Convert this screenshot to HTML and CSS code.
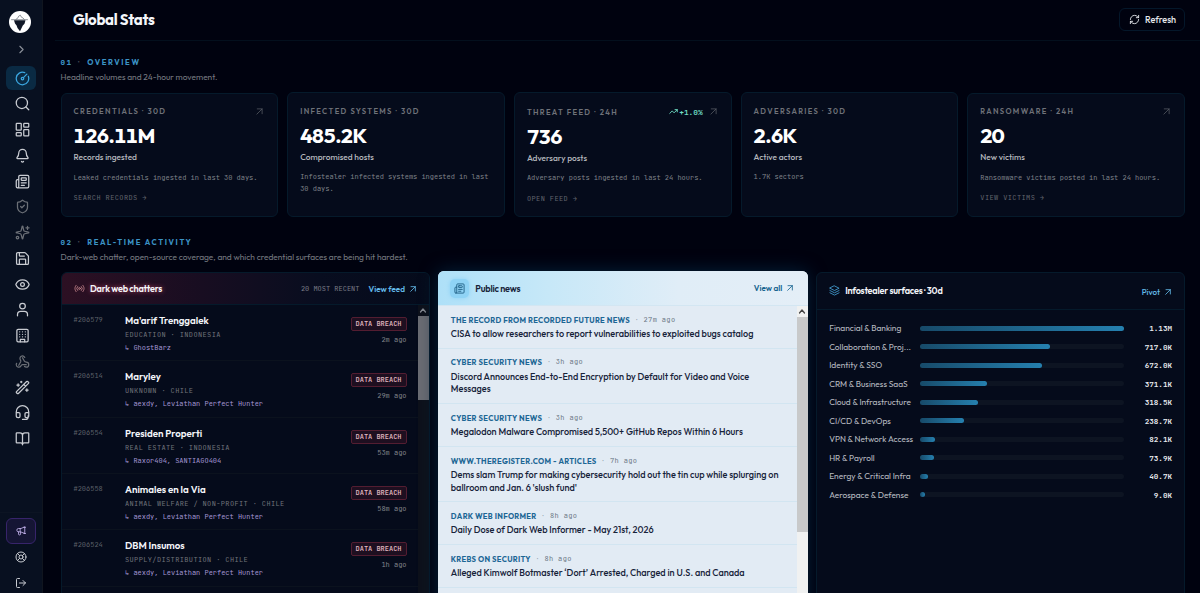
FILE: index.html
```
<!DOCTYPE html>
<html lang="en">

<head>
    <meta charset="UTF-8">
    <meta name="viewport" content="width=device-width, initial-scale=1.0">
    <title>Global Stats</title>
    <link rel="stylesheet" href="styles.css">
</head>

<body>
    <!-- shared icons -->
    <svg class="sprite">
        <symbol id="arrow" viewBox="0 0 24 24"><path d="M6 5h13v13M19 5 5 19" /></symbol>
        <symbol id="news" viewBox="0 0 24 24"><path d="M15 18h-5M18 14h-8M4 22h16a2 2 0 0 0 2-2V4a2 2 0 0 0-2-2H8a2 2 0 0 0-2 2v16a2 2 0 0 1-4 0v-9a2 2 0 0 1 2-2h2" /><rect width="8" height="4" x="10" y="6" rx="1" /></symbol>
    </svg>

    <nav class="sidebar">
        <div class="logo">
            <svg viewBox="0 0 22 22"><path d="M5 9.200h11.500l-1 3.600-1.700 1.700-2.800 5.700L8.500 17l-.9-2.600-1.600-1.800z" /><path class="line" d="M2.500 8.700h16M7 8.300l2-1.500.700-1.700 1.700-.9 1 2 1.500.7 1.200 1.300" /></svg>
        </div>
        <svg class="expand" viewBox="0 0 24 24"><path d="m9 18 6-6-6-6" /></svg>
        <ul class="menu">
            <li class="active"><svg viewBox="0 0 24 24"><path d="M15.600 2.700a10 10 0 1 0 5.700 5.700" /><circle cx="12" cy="12" r="2" /><path d="M13.400 10.600 19 5" /></svg></li>
            <li><svg viewBox="0 0 24 24"><circle cx="11" cy="11" r="9" /><path d="m22 22-4.500-4.500" /></svg></li>
            <li><svg viewBox="0 0 24 24"><rect x="2" y="2" width="8" height="11" rx="1" /><rect x="14" y="2" width="8" height="6" rx="1" /><rect x="14" y="12" width="8" height="10" rx="1" /><rect x="2" y="17" width="8" height="5" rx="1" /></svg></li>
            <li><svg viewBox="0 0 24 24"><path d="M10.300 21.500a2 2 0 0 0 3.400 0M3.300 15.300A1 1 0 0 0 4 17h16a1 1 0 0 0 .700-1.700C19.400 14 18 12.500 18 8A6 6 0 0 0 6 8c0 4.500-1.400 6-2.700 7.300" /></svg></li>
            <li><svg viewBox="0 0 24 24"><use href="#news" /></svg></li>
            <li class="dim"><svg viewBox="0 0 24 24"><path d="M20 13c0 5-3.500 7.500-7.700 9a1 1 0 0 1-.700 0C7.500 20.500 4 18 4 13V6a1 1 0 0 1 1-1c2 0 4.500-1.200 6.200-2.700a1.200 1.200 0 0 1 1.500 0C14.500 3.800 17 5 19 5a1 1 0 0 1 1 1z" /><path d="m9 12 2 2 4-4" /></svg></li>
            <li class="dim"><svg viewBox="0 0 24 24"><path d="M9.900 15.500A2 2 0 0 0 8.500 14l-6.100-1.600a.5.5 0 0 1 0-1L8.500 10A2 2 0 0 0 9.900 8.500l1.600-6.100a.5.5 0 0 1 1 0L14 8.500a2 2 0 0 0 1.500 1.500l6.100 1.500a.5.5 0 0 1 0 1L15.500 14a2 2 0 0 0-1.500 1.500l-1.500 6.100a.5.5 0 0 1-1 0z" /><path d="M20 2v5M22.500 4.500h-5" /><circle cx="4" cy="20" r="2" /></svg></li>
            <li><svg viewBox="0 0 24 24"><path d="M15.200 2.500a2 2 0 0 1 1.400.6l4.300 4.300a2 2 0 0 1 .6 1.400V19.500a2 2 0 0 1-2 2h-15a2 2 0 0 1-2-2v-15a2 2 0 0 1 2-2z" /><path d="M17 21v-7a1 1 0 0 0-1-1H8a1 1 0 0 0-1 1v7M7 3v4a1 1 0 0 0 1 1h7" /></svg></li>
            <li><svg viewBox="0 0 24 24"><path d="M1.500 12.300a1 1 0 0 1 0-.7 11.300 11.300 0 0 1 21 0 1 1 0 0 1 0 .7 11.300 11.300 0 0 1-21 0" /><circle cx="12" cy="12" r="3" /></svg></li>
            <li><svg viewBox="0 0 24 24"><circle cx="12" cy="6.500" r="4.500" /><path d="M20 22v-2a5 5 0 0 0-5-5H9a5 5 0 0 0-5 5v2" /></svg></li>
            <li><svg viewBox="0 0 24 24"><rect x="3" y="2" width="18" height="20" rx="2" /><path d="M8.500 22v-4h7v4M7.500 6h.01M12 6h.01M16.500 6h.01M7.500 10h.01M12 10h.01M16.500 10h.01M7.500 14h.01M12 14h.01M16.500 14h.01" /></svg></li>
            <li class="dim"><svg viewBox="0 0 24 24"><path d="M18 17h-6c-1.100 0-2 1-2.500 2A4 4 0 0 1 2 17c0-.7.200-1.400.6-2M6 18l3.100-5.700c.5-1 .1-2.100-.5-3A4 4 0 1 1 15.600 5.500M12 6l3.100 5.700c.5 1 1.700 1.300 2.900 1.300a4 4 0 0 1 0 8c-1 0-2-.4-2.700-1" /></svg></li>
            <li><svg viewBox="0 0 24 24"><path d="m21.600 3.600-1.300-1.200a1.200 1.200 0 0 0-1.700 0L2.400 18.600a1.200 1.200 0 0 0 0 1.700l1.300 1.300a1.200 1.200 0 0 0 1.700 0L21.600 5.400a1.200 1.200 0 0 0 0-1.800M14 7l3 3M5 6v4M19 14v4M10 2v2M7 8H3M21 16h-4M11 3H9" /></svg></li>
            <li><svg viewBox="0 0 24 24"><path d="M2 12h4a2 2 0 0 1 2 2v4a2 2 0 0 1-2 2H5a3 3 0 0 1-3-3v-6a10 10 0 0 1 20 0v6a3 3 0 0 1-3 3h-1a2 2 0 0 1-2-2v-4a2 2 0 0 1 2-2h4M21 17v2a4 4 0 0 1-4 4h-5" /></svg></li>
            <li><svg viewBox="0 0 24 24"><path d="M12 7v15M3 19a1 1 0 0 1-1-1V4a1 1 0 0 1 1-1h5a4 4 0 0 1 4 4 4 4 0 0 1 4-4h5a1 1 0 0 1 1 1v14a1 1 0 0 1-1 1h-6a3 3 0 0 0-3 3 3 3 0 0 0-3-3z" /></svg></li>
        </ul>
        <div class="bottom">
            <div class="promo"><svg viewBox="0 0 24 24"><path d="M21 3v15L11 14H6a4 4 0 0 1 0-8h5zM10 6v8M6 14v5a2.500 2.500 0 0 0 5 0v-4M19 3h4M19 18h4" /></svg></div>
            <svg viewBox="0 0 24 24"><circle cx="12" cy="12" r="10" /><circle cx="12" cy="12" r="4" /><path d="m5 5 4.200 4.200M14.800 9.200 19 5M14.800 14.800 19 19M9.200 14.800 5 19" /></svg>
            <svg viewBox="0 0 24 24"><path d="M9 21H5a2 2 0 0 1-2-2V5a2 2 0 0 1 2-2h4M16 17l5-5-5-5M21 12H9" /></svg>
        </div>
    </nav>

    <main>
        <header class="topbar">
            <h1>Global Stats</h1>
            <button class="refresh">
                <svg viewBox="0 0 24 24"><path d="M3 12a9 9 0 0 1 9-9 9.800 9.800 0 0 1 6.700 2.700L21 8M21 3v5h-5M21 12a9 9 0 0 1-9 9 9.800 9.800 0 0 1-6.700-2.700L3 16M8 16H3v5" /></svg>
                <span>Refresh</span>
            </button>
        </header>

        <section class="overview">
            <h2><b>01</b><i>·</i><span>OVERVIEW</span></h2>
            <p class="lead">Headline volumes and 24-hour movement.</p>
            <div class="cards">
                <article class="card">
                    <div class="card-top"><span>CREDENTIALS · 30D</span><svg class="go"><use href="#arrow" /></svg></div>
                    <strong>126.11M</strong>
                    <h3>Records ingested</h3>
                    <p>Leaked credentials ingested in last 30 days.</p>
                    <a>SEARCH RECORDS →</a>
                </article>
                <article class="card plain">
                    <div class="card-top"><span>INFECTED SYSTEMS · 30D</span></div>
                    <strong>485.2K</strong>
                    <h3>Compromised hosts</h3>
                    <p>Infostealer infected systems ingested in last 30 days.</p>
                </article>
                <article class="card feed">
                    <div class="card-top"><span>THREAT FEED · 24H</span>
                        <em><svg viewBox="0 0 24 24"><path d="M16 7h6v6M22 7l-8.500 8.500-5-5L2 17" /></svg>+1.0%</em>
                        <svg class="go"><use href="#arrow" /></svg></div>
                    <strong>736</strong>
                    <h3>Adversary posts</h3>
                    <p>Adversary posts ingested in last 24 hours.</p>
                    <a>OPEN FEED →</a>
                </article>
                <article class="card plain">
                    <div class="card-top"><span>ADVERSARIES · 30D</span></div>
                    <strong>2.6K</strong>
                    <h3>Active actors</h3>
                    <p>1.7K sectors</p>
                </article>
                <article class="card">
                    <div class="card-top"><span>RANSOMWARE · 24H</span><svg class="go"><use href="#arrow" /></svg></div>
                    <strong>20</strong>
                    <h3>New victims</h3>
                    <p>Ransomware victims posted in last 24 hours.</p>
                    <a>VIEW VICTIMS →</a>
                </article>
            </div>
        </section>

        <section class="activity">
            <h2><b>02</b><i>·</i><span>REAL-TIME ACTIVITY</span></h2>
            <p class="lead">Dark-web chatter, open-source coverage, and which credential surfaces are being hit hardest.</p>
            <div class="panels">
                <div class="panel chatter">
                    <div class="panel-head">
                        <svg class="live" viewBox="0 0 24 24"><path d="M4.900 19.100C1 15.200 1 8.800 4.900 4.900M7.800 16.200a6 6 0 0 1 0-8.500M16.200 7.800a6 6 0 0 1 0 8.500M19.100 4.900c3.900 3.900 3.900 10.200 0 14.100" /><circle cx="12" cy="12" r="2" /></svg>
                        <h3>Dark web chatters</h3>
                        <small>20 MOST RECENT</small>
                        <a>View feed <svg><use href="#arrow" /></svg></a>
                    </div>
                    <div class="panel-body">
                        <div class="rows">
                            <div class="post"><span class="id">#206579</span><div class="who"><h4>Ma'arif Trenggalek</h4><p>EDUCATION · INDONESIA</p><q>↳ GhostBarz</q></div><div class="tag"><b>DATA BREACH</b><time>2m ago</time></div></div>
                            <div class="post"><span class="id">#206514</span><div class="who"><h4>Maryley</h4><p>UNKNOWN · CHILE</p><q>↳ aexdy, Leviathan Perfect Hunter</q></div><div class="tag"><b>DATA BREACH</b><time>29m ago</time></div></div>
                            <div class="post"><span class="id">#206554</span><div class="who"><h4>Presiden Properti</h4><p>REAL ESTATE · INDONESIA</p><q>↳ Raxor404, SANTIAGO404</q></div><div class="tag"><b>DATA BREACH</b><time>53m ago</time></div></div>
                            <div class="post"><span class="id">#206558</span><div class="who"><h4>Animales en la Via</h4><p>ANIMAL WELFARE / NON-PROFIT · CHILE</p><q>↳ aexdy, Leviathan Perfect Hunter</q></div><div class="tag"><b>DATA BREACH</b><time>58m ago</time></div></div>
                            <div class="post"><span class="id">#206524</span><div class="who"><h4>DBM Insumos</h4><p>SUPPLY/DISTRIBUTION · CHILE</p><q>↳ aexdy, Leviathan Perfect Hunter</q></div><div class="tag"><b>DATA BREACH</b><time>1h ago</time></div></div>
                        </div>
                        <div class="scroll"><svg viewBox="0 0 10 10"><path d="m2.500 6.500 2.500-3 2.500 3" /></svg><div class="thumb"></div></div>
                    </div>
                </div>

                <div class="panel news">
                    <div class="panel-head">
                        <span class="badge"><svg viewBox="0 0 24 24"><use href="#news" /></svg></span>
                        <h3>Public news</h3>
                        <a>View all <svg><use href="#arrow" /></svg></a>
                    </div>
                    <div class="panel-body">
                        <div class="rows">
                            <div class="item"><p><b>THE RECORD FROM RECORDED FUTURE NEWS</b><i>·</i><time>27m ago</time></p><h4>CISA to allow researchers to report vulnerabilities to exploited bugs catalog</h4></div>
                            <div class="item"><p><b>CYBER SECURITY NEWS</b><i>·</i><time>3h ago</time></p><h4>Discord Announces End-to-End Encryption by Default for Video and Voice<br>Messages</h4></div>
                            <div class="item"><p><b>CYBER SECURITY NEWS</b><i>·</i><time>3h ago</time></p><h4>Megalodon Malware Compromised 5,500+ GitHub Repos Within 6 Hours</h4></div>
                            <div class="item"><p><b>WWW.THEREGISTER.COM - ARTICLES</b><i>·</i><time>7h ago</time></p><h4>Dems slam Trump for making cybersecurity hold out the tin cup while splurging on<br>ballroom and Jan. 6 'slush fund'</h4></div>
                            <div class="item"><p><b>DARK WEB INFORMER</b><i>·</i><time>8h ago</time></p><h4>Daily Dose of Dark Web Informer - May 21st, 2026</h4></div>
                            <div class="item"><p><b>KREBS ON SECURITY</b><i>·</i><time>8h ago</time></p><h4>Alleged Kimwolf Botmaster ‘Dort’ Arrested, Charged in U.S. and Canada</h4></div>
                        </div>
                        <div class="scroll"><svg viewBox="0 0 10 10"><path d="m2.500 6.500 2.500-3 2.500 3" /></svg><div class="thumb"></div></div>
                    </div>
                </div>

                <div class="panel surfaces">
                    <div class="panel-head">
                        <svg class="layers" viewBox="0 0 24 24"><path d="M12 2 22 7 12 12 2 7zM2 12l10 5 10-5M2 17l10 5 10-5" /></svg>
                        <h3>Infostealer surfaces · 30d</h3>
                        <a>Pivot <svg><use href="#arrow" /></svg></a>
                    </div>
                    <div class="bars">
                        <div class="bar"><span>Financial &amp; Banking</span><div><i style="width: 100%"></i></div><b>1.13M</b></div>
                        <div class="bar"><span>Collaboration &amp; Proj...</span><div><i style="width: 63.600%"></i></div><b>717.0K</b></div>
                        <div class="bar"><span>Identity &amp; SSO</span><div><i style="width: 59.600%"></i></div><b>672.0K</b></div>
                        <div class="bar"><span>CRM &amp; Business SaaS</span><div><i style="width: 32.900%"></i></div><b>371.1K</b></div>
                        <div class="bar"><span>Cloud &amp; Infrastructure</span><div><i style="width: 28.300%"></i></div><b>318.5K</b></div>
                        <div class="bar"><span>CI/CD &amp; DevOps</span><div><i style="width: 21.300%"></i></div><b>238.7K</b></div>
                        <div class="bar"><span>VPN &amp; Network Access</span><div><i style="width: 7.400%"></i></div><b>82.1K</b></div>
                        <div class="bar"><span>HR &amp; Payroll</span><div><i style="width: 6.600%"></i></div><b>73.9K</b></div>
                        <div class="bar"><span>Energy &amp; Critical Infra</span><div><i style="width: 3.700%"></i></div><b>40.7K</b></div>
                        <div class="bar"><span>Aerospace &amp; Defense</span><div><i style="width: 2.200%"></i></div><b>9.0K</b></div>
                    </div>
                </div>
            </div>
        </section>
    </main>
</body>

</html>
```
FILE: styles.css
```
* {
    margin: 0;
    padding: 0;
    box-sizing: border-box;
}
body {
    display: flex;
    height: 593px;
    overflow: hidden;
    background-color: #00020f;
    color: #f4f6fa;
    font-family: Outfit, Lato, sans-serif;
    font-size: 8.400px;
}
svg {
    flex: none;
    fill: none;
    stroke: currentColor;
    stroke-width: 2;
    stroke-linecap: round;
    stroke-linejoin: round;
}
i, em {
    font-style: normal;
}
q::before, q::after {
    content: none;
}
.sprite {
    position: absolute;
    width: 0;
    height: 0;
}

/* sidebar */
.sidebar {
    display: flex;
    flex-direction: column;
    flex: none;
    width: 43px;
    height: 593px;
    background-color: #081020;
    border-right: 1px solid #10151f;
    color: #c9ccd2;
}
.logo {
    width: 22px;
    height: 22px;
    margin: 11px 0 0 9px;
    border-radius: 50%;
    background-color: #fff;
}
.logo svg {
    display: block;
    width: 22px;
    height: 22px;
    fill: #111827;
    stroke: none;
}
.logo .line {
    fill: none;
    stroke: #4a515d;
    stroke-width: .6;
}
.expand {
    width: 13px;
    height: 13px;
    margin: 10px 0 10px 15px;
    color: #8b9099;
}
.menu {
    list-style: none;
}
.menu li {
    display: flex;
    justify-content: center;
    align-items: center;
    width: 30px;
    height: 24px;
    margin: 0 0 1.770px 6px;
    padding-left: 3px;
    border-radius: 6px;
}
.menu svg {
    width: 15px;
    height: 15px;
}
.menu .active {
    background-color: #0a2a43;
    color: #3ba7e0;
}
.menu .dim {
    color: #6b6f76;
}
.bottom {
    display: flex;
    flex-direction: column;
    align-items: center;
    margin-top: auto;
    height: 81px;
    padding-top: 5px;
    border-top: 1px solid #0c1423;
}
.promo {
    display: flex;
    flex: none;
    justify-content: center;
    align-items: center;
    width: 30px;
    height: 26px;
    margin-bottom: 7px;
    border: 1px solid #37246b;
    border-radius: 6px;
    background-color: #151534;
    color: #c7b5ef;
}
.bottom svg {
    width: 12px;
    height: 12px;
    margin-bottom: 14px;
}
.promo svg {
    width: 10px;
    height: 10px;
    margin: 0;
}

/* page */
main {
    flex: 1;
    padding: 0 15px 0 17.500px;
}
.topbar {
    display: flex;
    justify-content: space-between;
    align-items: center;
    height: 41px;
    margin: 0 -15px 0 -6px;
    padding: 0 15px 2px 18.500px;
    border-bottom: 1px solid #030f1d;
}
h1 {
    padding-top: 1px;
    font-size: 15px;
    font-weight: bold;
    letter-spacing: -.3px;
}
.refresh {
    display: flex;
    align-items: center;
    gap: 5px;
    width: 66px;
    height: 23px;
    padding-left: 9px;
    border: 1px solid #04172a;
    border-radius: 6px;
    background: none;
    color: #e4e7ec;
    font: 500 9.100px Outfit, Lato, sans-serif;
}
.refresh svg {
    width: 11px;
    height: 11px;
}
h2 {
    display: flex;
    height: 12px;
    line-height: 12px;
    font-size: 7.600px;
    font-weight: bold;
    letter-spacing: 1.600px;
    color: #3c93c6;
}
h2 b {
    width: 17.500px;
    font-family: "JetBrains Mono", "DejaVu Sans Mono", monospace;
    font-size: 7.600px;
    letter-spacing: 1.400px;
}
h2 i {
    width: 9.200px;
    color: #4a5058;
}
.lead {
    height: 12px;
    margin-top: 3px;
    line-height: 12px;
    color: #777a81;
}
.overview {
    height: 180px;
    padding-top: 15px;
}

/* stat cards */
.cards {
    display: grid;
    grid-template-columns: repeat(5, 1fr);
    gap: 9px;
    align-items: center;
    margin-top: 9px;
}
.card {
    height: 124px;
    padding: 10.500px 12px;
    border: 1px solid #051a2b;
    border-radius: 6px;
    background-color: #050b1b;
}
.card.plain, .card.feed {
    height: 125px;
}
.card.feed {
    padding-top: 11.500px;
}
.card-top {
    display: flex;
    align-items: center;
    height: 14px;
    color: #6f7279;
    font-size: 7.600px;
    font-weight: 600;
    letter-spacing: 1.350px;
}
.card-top span {
    flex: 1;
}
.go {
    width: 9px;
    height: 9px;
    margin-right: 1px;
    color: #5a5e66;
}
.card em {
    display: flex;
    align-items: center;
    gap: 1.500px;
    margin-right: 6px;
    color: #6fdcc2;
    font: bold 7.800px "JetBrains Mono", "DejaVu Sans Mono", monospace;
    letter-spacing: 0;
}
.card em svg {
    width: 9px;
    height: 9px;
    stroke-width: 2.500;
}
.card strong {
    display: block;
    height: 24px;
    margin-top: 5px;
    line-height: 24px;
    font-size: 20.800px;
    font-variant-numeric: tabular-nums;
    letter-spacing: -.600px;
    color: #fff;
}
.card h3 {
    height: 12px;
    margin-top: 4px;
    line-height: 12px;
    font-size: 8.400px;
    font-weight: 500;
    color: #b4b7bd;
}
.card p {
    margin-top: 8.800px;
    line-height: 11.300px;
    font-family: "JetBrains Mono", "DejaVu Sans Mono", monospace;
    font-size: 6.980px;
    color: #7f8289;
}
.card a {
    display: block;
    margin-top: 9px;
    line-height: 11px;
    font-family: "JetBrains Mono", "DejaVu Sans Mono", monospace;
    font-size: 6.980px;
    letter-spacing: .4px;
    color: #62656d;
}

/* activity panels */
.activity {
    padding-top: 14.500px;
}
.panels {
    display: grid;
    grid-template-columns: repeat(3, 1fr);
    gap: 9px;
    margin-top: 9.500px;
}
.panel {
    height: 340px;
    border: 1px solid #051a2b;
    border-radius: 6px;
    background-color: #050b1b;
    overflow: hidden;
}
.panel-head {
    display: flex;
    align-items: center;
    height: 32px;
    padding: 0 12px;
    border-bottom: 1px solid #051a2b;
}
.panel-head h3 {
    flex: 1;
    font-size: 9.100px;
    font-weight: 600;
    letter-spacing: -.230px;
}
.panel-head a {
    display: flex;
    align-items: center;
    gap: 4px;
    font-size: 8.100px;
    font-weight: 600;
    color: #63b9e8;
}
.panel-head a svg {
    width: 8px;
    height: 8px;
    stroke-width: 2.500;
}
.panel-body {
    display: flex;
    height: 306px;
}
.rows {
    flex: 1;
}
.scroll {
    width: 11px;
    background-color: #0d111b;
    color: #858991;
}
.scroll svg {
    display: block;
    width: 10px;
    height: 11px;
    stroke-width: 1.300;
}
.thumb {
    height: 84px;
    background-color: #6a6c73;
}

.chatter {
    margin-right: -.700px;
}
.chatter .panel-head {
    background: linear-gradient(90deg, #2c1023, #180d21 38%, #080d1f 70%, #050b1b);
}
.chatter h3 {
    text-shadow: 0 0 5px #b04460;
}
.live {
    width: 11px;
    height: 11px;
    margin-right: 5.500px;
    color: #c08088;
}
small {
    margin-right: 9px;
    font-family: "JetBrains Mono", "DejaVu Sans Mono", monospace;
    font-size: 6.980px;
    color: #7a7c86;
}
.post {
    display: flex;
    height: 56.330px;
    padding: 9px 11.500px 0 12px;
    border-bottom: 1px solid #0b121e;
    font-family: "JetBrains Mono", "DejaVu Sans Mono", monospace;
    font-size: 6.980px;
}
.id {
    width: 51.500px;
    line-height: 12px;
    color: #5c6068;
}
.who {
    flex: 1;
}
.who h4 {
    height: 13px;
    line-height: 13px;
    font-family: Outfit, Lato, sans-serif;
    font-size: 9.750px;
    font-weight: 600;
    white-space: nowrap;
}
.who p {
    height: 13px;
    margin-top: 1px;
    line-height: 13px;
    letter-spacing: .380px;
    white-space: nowrap;
    color: #70737a;
}
.who q {
    display: block;
    line-height: 13px;
    white-space: nowrap;
    color: #a396d3;
}
.tag {
    display: flex;
    flex-direction: column;
    align-items: flex-end;
    padding-top: 3px;
    color: #82858c;
}
.tag b {
    width: 56px;
    height: 14px;
    margin-bottom: 4px;
    border: 1px solid #531d31;
    border-radius: 2px;
    background-color: #1e0f20;
    line-height: 12px;
    text-align: center;
    color: #e5bcc4;
    font-weight: 500;
}

.news {
    margin: -1px -.700px 0 0;
    border: none;
    background-color: #e2ebf4;
    color: #17233a;
    box-shadow: 0 0 18px #04203a;
}
.news .panel-head {
    height: 35px;
    border-bottom: 1px solid #d3e6f2;
    background: linear-gradient(90deg, #aee0f8, #c7e8f8 30%, #e0edf7 65%, #e4eef7);
}
.badge {
    display: flex;
    justify-content: center;
    align-items: center;
    width: 19px;
    height: 19px;
    margin-right: 6px;
    border-radius: 5px;
    background-color: #8fd3f5;
    box-shadow: 0 0 4px #8fd3f5;
    color: #1f5f84;
}
.badge svg {
    width: 11px;
    height: 11px;
}
.news .panel-head h3 {
    font-size: 9.100px;
}
.news .panel-head a {
    margin-right: 1.500px;
    color: #17638f;
}
.item {
    padding: 7.700px 12px 6.900px 12.500px;
    border-bottom: 1px solid #d2e5f1;
}
.item p {
    display: flex;
    height: 13px;
    line-height: 12px;
    font-size: 7.600px;
    letter-spacing: .300px;
    color: #1d6795;
}
.item i {
    width: 13.500px;
    text-align: center;
    color: #8c9aaa;
}
.item time {
    font-family: "JetBrains Mono", "DejaVu Sans Mono", monospace;
    font-size: 6.980px;
    letter-spacing: .380px;
    color: #6b7785;
}
.item h4 {
    margin-top: 1.300px;
    line-height: 12.800px;
    font-size: 9.130px;
    font-weight: 500;
    white-space: nowrap;
}
.news .scroll {
    background-color: #f0f1f1;
    color: #454545;
}
.news .thumb {
    height: 215px;
    background-color: #c8c9ca;
}

.surfaces .panel-head {
    height: 36.500px;
}
.surfaces .panel-head a {
    padding-top: 2px;
    font-weight: 500;
}
.layers {
    width: 11px;
    height: 11px;
    margin-right: 5px;
    color: #3f93c4;
}
.bars {
    padding: 9.300px 12px;
}
.bar {
    display: flex;
    align-items: center;
    height: 18.560px;
    color: #b9bcc2;
}
.bar span {
    width: 91px;
    white-space: nowrap;
}
.bar div {
    width: 204px;
    height: 5px;
    border-radius: 3px;
    background-color: #0d1422;
}
.bar i {
    display: block;
    height: 5px;
    border-radius: 3px;
    background: linear-gradient(90deg, #174a69, #2580af);
}
.bar b {
    flex: 1;
    text-align: right;
    font-family: "JetBrains Mono", "DejaVu Sans Mono", monospace;
    font-size: 7.600px;
    color: #e8eaee;
}
```
